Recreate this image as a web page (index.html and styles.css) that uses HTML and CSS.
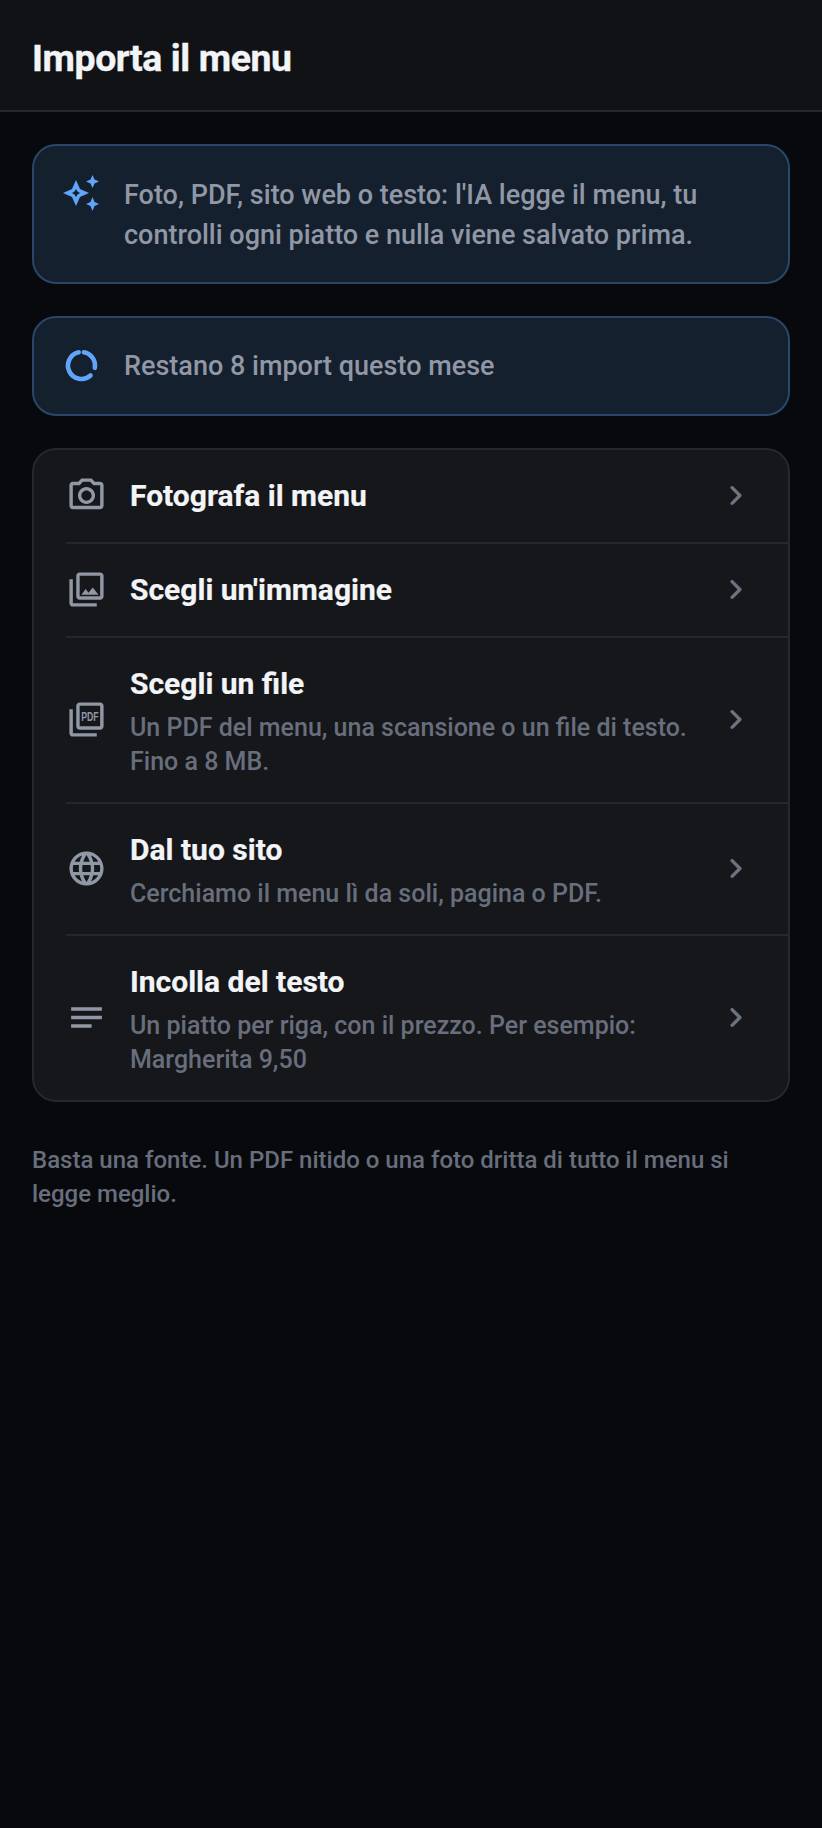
FILE: index.html
```html
<!DOCTYPE html>
<html lang="it">
<head>
<meta charset="utf-8">
<title>Importa il menu</title>
<link rel="stylesheet" href="styles.css">
</head>
<body>
<header class="topbar"><h1 class="title">Importa il menu</h1></header>
<main class="content">
  <section class="notice notice-info">
    <svg class="notice-icon" viewBox="0 0 41 41"><path fill="#60a5fa" fill-rule="evenodd" d="M15 5L19 14 28 18 19 22 15 31 11 22 2 18 11 14ZM15 14L13.5 16.5 11 18 13.5 19.5 15 22 16.5 19.5 19 18 16.5 16.5ZM31.5 0L33.5 4.5 38 6.5 33.5 8.5 31.5 13 29.5 8.5 25 6.5 29.5 4.5ZM31.5 22L33.5 27 38 29 33.5 31 31.5 36 29.5 31 25 29 29.5 27Z"/></svg>
    <p class="notice-text">Foto, PDF, sito web o testo: l'IA legge il menu, tu controlli ogni piatto e nulla viene salvato prima.</p>
  </section>
  <section class="notice notice-quota">
    <svg class="notice-icon" viewBox="0 0 41 41"><path class="ring" d="M22.84 7.2A13.5 13.5 0 0 1 33.79 22.84"/><path class="ring" d="M29.53 30.53A13.5 13.5 0 1 1 17.69 7.3"/></svg>
    <p class="notice-text">Restano 8 import questo mese</p>
  </section>
  <nav class="card">
    <a class="row">
      <svg class="row-icon" viewBox="0 0 24 24"><path d="M20 4h-3.17L15 2H9L7.17 4H4c-1.1 0-2 .9-2 2v12c0 1.1.9 2 2 2h16c1.1 0 2-.9 2-2V6c0-1.1-.9-2-2-2zm0 14H4V6h4.05l1.83-2h4.24l1.83 2H20v12zM12 7c-2.76 0-5 2.24-5 5s2.24 5 5 5 5-2.24 5-5-2.24-5-5-5zm0 8c-1.65 0-3-1.35-3-3s1.35-3 3-3 3 1.35 3 3-1.35 3-3 3z"/></svg>
      <div class="row-body"><div class="row-title">Fotografa il menu</div></div>
      <svg class="row-chevron" viewBox="0 0 24 24"><path d="M9.29 6.71c-.39.39-.39 1.02 0 1.41L13.17 12l-3.88 3.88c-.39.39-.39 1.02 0 1.41.39.39 1.02.39 1.41 0l4.59-4.59c.39-.39.39-1.02 0-1.41L10.7 6.7c-.38-.38-1.02-.38-1.41.01z"/></svg>
    </a>
    <a class="row">
      <svg class="row-icon" viewBox="0 0 24 24"><path d="M20 4v12H8V4h12m0-2H8c-1.1 0-2 .9-2 2v12c0 1.1.9 2 2 2h12c1.1 0 2-.9 2-2V4c0-1.1-.9-2-2-2zm-8.5 9.67l1.69 2.26 2.48-3.1L19 15H9zM2 6v14c0 1.1.9 2 2 2h14v-2H4V6H2z"/></svg>
      <div class="row-body"><div class="row-title">Scegli un'immagine</div></div>
      <svg class="row-chevron" viewBox="0 0 24 24"><path d="M9.29 6.71c-.39.39-.39 1.02 0 1.41L13.17 12l-3.88 3.88c-.39.39-.39 1.02 0 1.41.39.39 1.02.39 1.41 0l4.59-4.59c.39-.39.39-1.02 0-1.41L10.7 6.7c-.38-.38-1.02-.38-1.41.01z"/></svg>
    </a>
    <a class="row">
      <svg class="row-icon" viewBox="0 0 24 24"><path d="M20 2H8c-1.1 0-2 .9-2 2v12c0 1.1.9 2 2 2h12c1.1 0 2-.9 2-2V4c0-1.1-.9-2-2-2zm0 14H8V4h12v12zM4 6H2v14c0 1.1.9 2 2 2h14v-2H4V6z"/><text class="pdf-mark" x="8.9" y="13" textLength="10.2" lengthAdjust="spacingAndGlyphs">PDF</text></svg>
      <div class="row-body"><div class="row-title">Scegli un file</div><div class="row-sub">Un PDF del menu, una scansione o un file di testo. Fino a 8 MB.</div></div>
      <svg class="row-chevron" viewBox="0 0 24 24"><path d="M9.29 6.71c-.39.39-.39 1.02 0 1.41L13.17 12l-3.88 3.88c-.39.39-.39 1.02 0 1.41.39.39 1.02.39 1.41 0l4.59-4.59c.39-.39.39-1.02 0-1.41L10.7 6.7c-.38-.38-1.02-.38-1.41.01z"/></svg>
    </a>
    <a class="row">
      <svg class="row-icon" viewBox="0 0 24 24"><path d="M11.99 2C6.47 2 2 6.48 2 12s4.47 10 9.99 10C17.52 22 22 17.52 22 12S17.52 2 11.99 2zm6.93 6h-2.95c-.32-1.25-.78-2.45-1.38-3.56 1.84.63 3.37 1.91 4.33 3.56zM12 4.04c.83 1.2 1.48 2.53 1.91 3.96h-3.82c.43-1.43 1.08-2.76 1.91-3.96zM4.26 14C4.1 13.36 4 12.69 4 12s.1-1.36.26-2h3.38c-.08.66-.14 1.32-.14 2 0 .68.06 1.34.14 2H4.26zm.82 2h2.95c.32 1.25.78 2.45 1.38 3.56-1.84-.63-3.37-1.9-4.33-3.56zm2.95-8H5.08c.96-1.66 2.49-2.93 4.33-3.56C8.81 5.55 8.35 6.75 8.03 8zM12 19.96c-.83-1.2-1.48-2.53-1.91-3.96h3.82c-.43 1.43-1.08 2.76-1.91 3.96zM14.34 14H9.66c-.09-.66-.16-1.32-.16-2 0-.68.07-1.35.16-2h4.68c.09.65.16 1.32.16 2 0 .68-.07 1.34-.16 2zm.25 5.56c.6-1.11 1.06-2.31 1.38-3.56h2.95c-.96 1.65-2.49 2.93-4.33 3.56zM16.36 14c.08-.66.14-1.32.14-2 0-.68-.06-1.34-.14-2h3.38c.16.64.26 1.31.26 2s-.1 1.36-.26 2h-3.38z"/></svg>
      <div class="row-body"><div class="row-title">Dal tuo sito</div><div class="row-sub">Cerchiamo il menu lì da soli, pagina o PDF.</div></div>
      <svg class="row-chevron" viewBox="0 0 24 24"><path d="M9.29 6.71c-.39.39-.39 1.02 0 1.41L13.17 12l-3.88 3.88c-.39.39-.39 1.02 0 1.41.39.39 1.02.39 1.41 0l4.59-4.59c.39-.39.39-1.02 0-1.41L10.7 6.7c-.38-.38-1.02-.38-1.41.01z"/></svg>
    </a>
    <a class="row">
      <svg class="row-icon" viewBox="0 0 24 24"><path d="M3 18h12v-2H3v2zM3 6v2h18V6H3zm0 7h18v-2H3v2z"/></svg>
      <div class="row-body"><div class="row-title">Incolla del testo</div><div class="row-sub">Un piatto per riga, con il prezzo. Per esempio: Margherita 9,50</div></div>
      <svg class="row-chevron" viewBox="0 0 24 24"><path d="M9.29 6.71c-.39.39-.39 1.02 0 1.41L13.17 12l-3.88 3.88c-.39.39-.39 1.02 0 1.41.39.39 1.02.39 1.41 0l4.59-4.59c.39-.39.39-1.02 0-1.41L10.7 6.7c-.38-.38-1.02-.38-1.41.01z"/></svg>
    </a>
  </nav>
  <p class="hint">Basta una fonte. Un PDF nitido o una foto dritta di tutto il menu si legge meglio.</p>
</main>
</body>
</html>
```
FILE: styles.css
```css
* { box-sizing: border-box; }
html, body { margin: 0; padding: 0; }
body {
  width: 822px;
  min-height: 1828px;
  background: #07090d;
  font-family: Roboto, "Liberation Sans", sans-serif;
  color: #f3f4f6;
}
.topbar {
  height: 112px;
  padding: 5px 32px 0;
  display: flex;
  align-items: center;
  background: #101216;
  border-bottom: 2px solid #23282f;
}
.title {
  margin: 0;
  font-size: 37.4px;
  font-weight: 700;
  letter-spacing: -0.4px;
  color: #f3f4f6;
  -webkit-text-stroke: 0.4px #f3f4f6;
}
.content {
  padding: 31.5px 32px 0;
  display: flex;
  flex-direction: column;
  gap: 32px;
}
.notice {
  display: flex;
  align-items: flex-start;
  gap: 22px;
  padding: 30.5px 27px 26.8px;
  background: #14202e;
  border: 2px solid #2a4669;
  border-radius: 24px;
}
.notice-info .notice-icon { margin-top: -1px; }
.notice-quota { align-items: center; padding-top: 27px; padding-bottom: 27.4px; }
.notice-quota .notice-text { padding-top: 2px; }
.notice-icon { width: 41px; height: 41px; flex: none; }
.ring {
  fill: none;
  stroke: #60a5fa;
  stroke-width: 4.6;
  stroke-linecap: round;
}
.notice-text {
  margin: 0;
  font-size: 27px;
  line-height: 39.6px;
  font-weight: 500;
  color: #9197a4;
}
.card {
  display: flex;
  flex-direction: column;
  background: #15171b;
  border: 2px solid #24282f;
  border-radius: 24px;
  overflow: hidden;
}
.row {
  display: flex;
  align-items: center;
  min-height: 92px;
  padding: 24.5px 32px;
  gap: 23px;
  position: relative;
}
.row + .row::before {
  content: "";
  position: absolute;
  top: -2px;
  left: 32px;
  right: 0;
  height: 2px;
  background: #23272e;
}
.row + .row { margin-top: 2px; }
.row-icon { width: 41px; height: 41px; flex: none; fill: #9198a5; }
.pdf-mark {
  font-family: "Liberation Sans", sans-serif;
  font-size: 7.6px;
  font-weight: 700;
}
.row-chevron { width: 41px; height: 41px; flex: none; fill: #6b7280; }
.row-body { flex: 1; min-width: 0; }
.row-title {
  font-size: 30px;
  line-height: 40px;
  font-weight: 700;
  color: #f3f4f6;
  -webkit-text-stroke: 0.2px #f3f4f6;
}
.row-title:not(:last-child) { margin: 2px 0 7px; }
.row-sub {
  margin-bottom: -2px;
  font-size: 25px;
  line-height: 34px;
  font-weight: 500;
  color: #686e7b;
}
.hint {
  margin: 9px 0 0;
  padding-right: 8px;
  font-size: 24px;
  line-height: 34px;
  font-weight: 500;
  color: #686e7b;
}
```
